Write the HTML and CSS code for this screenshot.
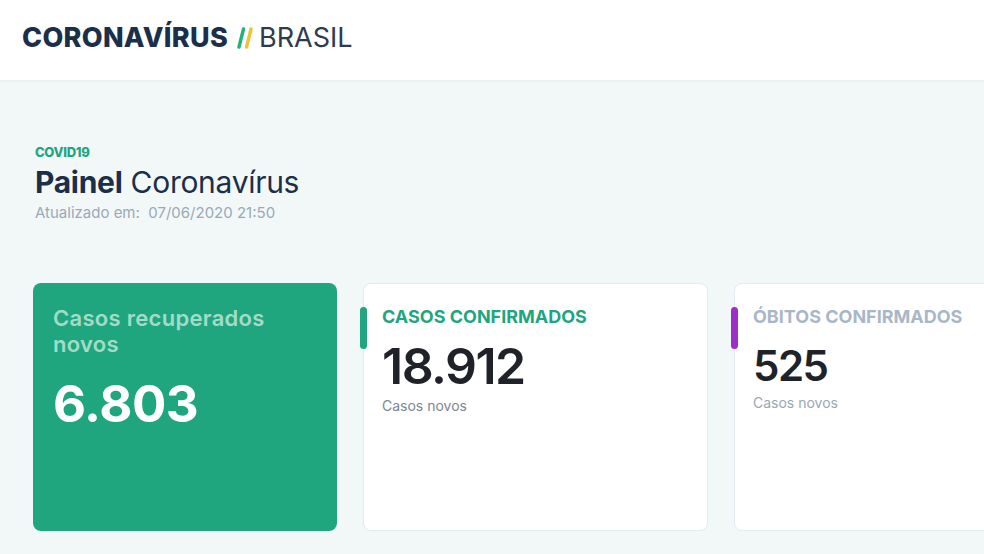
FILE: index.html
```html
<!DOCTYPE html>
<html lang="pt-BR">

<head>
    <meta charset="UTF-8">
    <meta name="viewport" content="width=device-width, initial-scale=1.0">
    <title>Coronavírus // Brasil</title>
    <link rel="stylesheet" href="styles.css">
</head>

<body>
    <header class="topbar">
        <h1 class="brand">
            <span class="brand-main">CORONAVÍRUS</span>
            <svg class="brand-slash" width="18" height="22" viewBox="0 0 18 22">
                <line x1="3" y1="20" x2="7.5" y2="2" stroke="#20b27a" stroke-width="3.4" stroke-linecap="round" />
                <line x1="10.5" y1="20" x2="15" y2="2" stroke="#f3c234" stroke-width="3.4" stroke-linecap="round" />
            </svg>
            <span class="brand-sub">BRASIL</span>
        </h1>
    </header>

    <main class="panel">
        <div class="panel-head">
            <span class="tag">COVID19</span>
            <h2 class="panel-title"><strong>Painel</strong> Coronavírus</h2>
            <p class="updated">Atualizado em:&nbsp; 07/06/2020 21:50</p>
        </div>

        <div class="cards">
            <div class="card card-recovered">
                <p class="recovered-label">Casos recuperados novos</p>
                <p class="recovered-value">6.803</p>
            </div>

            <div class="card card-stat">
                <span class="marker marker-green"></span>
                <p class="stat-title title-green">CASOS CONFIRMADOS</p>
                <p class="stat-value">18.912</p>
                <p class="stat-note">Casos novos</p>
            </div>

            <div class="card card-stat card-deaths">
                <span class="marker marker-purple"></span>
                <p class="stat-title title-grey">ÓBITOS CONFIRMADOS</p>
                <p class="stat-value">525</p>
                <p class="stat-note">Casos novos</p>
            </div>
        </div>
    </main>
</body>

</html>
```

FILE: styles.css
```css
body {
    margin: 0;
    font-family: Inter, "Liberation Sans", sans-serif;
    background-color: #f2f8f8;
    overflow: hidden;
}

p,
h1,
h2 {
    margin: 0;
}

.topbar {
    height: 80px;
    background-color: #ffffff;
    box-shadow: 0 1px 3px rgba(30, 60, 80, 0.06);
    display: flex;
    align-items: center;
    padding: 0 22px;
}

.brand {
    display: flex;
    align-items: center;
    gap: 6px;
    font-size: 27px;
    line-height: 1;
    margin-top: -6px;
}

.brand-main {
    font-weight: 800;
    color: #1c2f4a;
    letter-spacing: 0.3px;
}

.brand-slash {
    margin: 1px -1px 0 2px;
}

.brand-sub {
    font-weight: 400;
    color: #2d3b4c;
}

.panel {
    padding: 65px 0 0 33px;
}

.panel-head {
    padding-left: 2px;
}

.tag {
    display: block;
    font-size: 13px;
    line-height: 15px;
    font-weight: 800;
    color: #1fa57f;
    letter-spacing: -0.3px;
}

.panel-title {
    font-size: 30px;
    font-weight: 400;
    color: #1c2f4a;
    line-height: 36px;
    letter-spacing: -0.3px;
    margin-top: 4px;
}

.panel-title strong {
    font-weight: 700;
}

.updated {
    font-size: 15px;
    color: #9ba8b8;
    margin-top: 3px;
}

.cards {
    display: flex;
    gap: 26px;
    margin-top: 61px;
}

.card {
    flex: none;
    height: 248px;
    border-radius: 8px;
    box-sizing: border-box;
    position: relative;
}

.card-recovered {
    width: 304px;
    background-color: #20a67f;
    padding: 22px 20px;
}

.recovered-label {
    font-size: 22px;
    font-weight: 600;
    line-height: 26px;
    color: #a2dcc7;
    letter-spacing: 0.3px;
    width: 240px;
}

.recovered-value {
    font-size: 51px;
    font-weight: 700;
    color: #ffffff;
    margin-top: 16px;
    letter-spacing: -0.5px;
}

.card-stat {
    width: 345px;
    background-color: #ffffff;
    border: 1px solid #e2ebf0;
    padding: 22px 18px;
}

.marker {
    position: absolute;
    left: -4px;
    top: 23px;
    width: 7px;
    height: 42px;
    border-radius: 4px;
}

.marker-green {
    background-color: #1fa57f;
}

.marker-purple {
    background-color: #9c2fc5;
}

.stat-title {
    font-size: 18px;
    font-weight: 700;
    letter-spacing: 0;
}

.title-green {
    color: #1fa57f;
}

.title-grey {
    color: #a8b7c8;
}

.stat-value {
    font-size: 50px;
    font-weight: 600;
    color: #1f2329;
    letter-spacing: -1.5px;
    line-height: 60px;
    margin-top: 9px;
}

.stat-note {
    font-size: 14px;
    color: #7d8694;
    margin-top: 1px;
}

.card-deaths .stat-value {
    font-size: 42px;
    line-height: 54px;
    margin-top: 12px;
}

.card-deaths .stat-note {
    color: #9aa6b5;
}
```
